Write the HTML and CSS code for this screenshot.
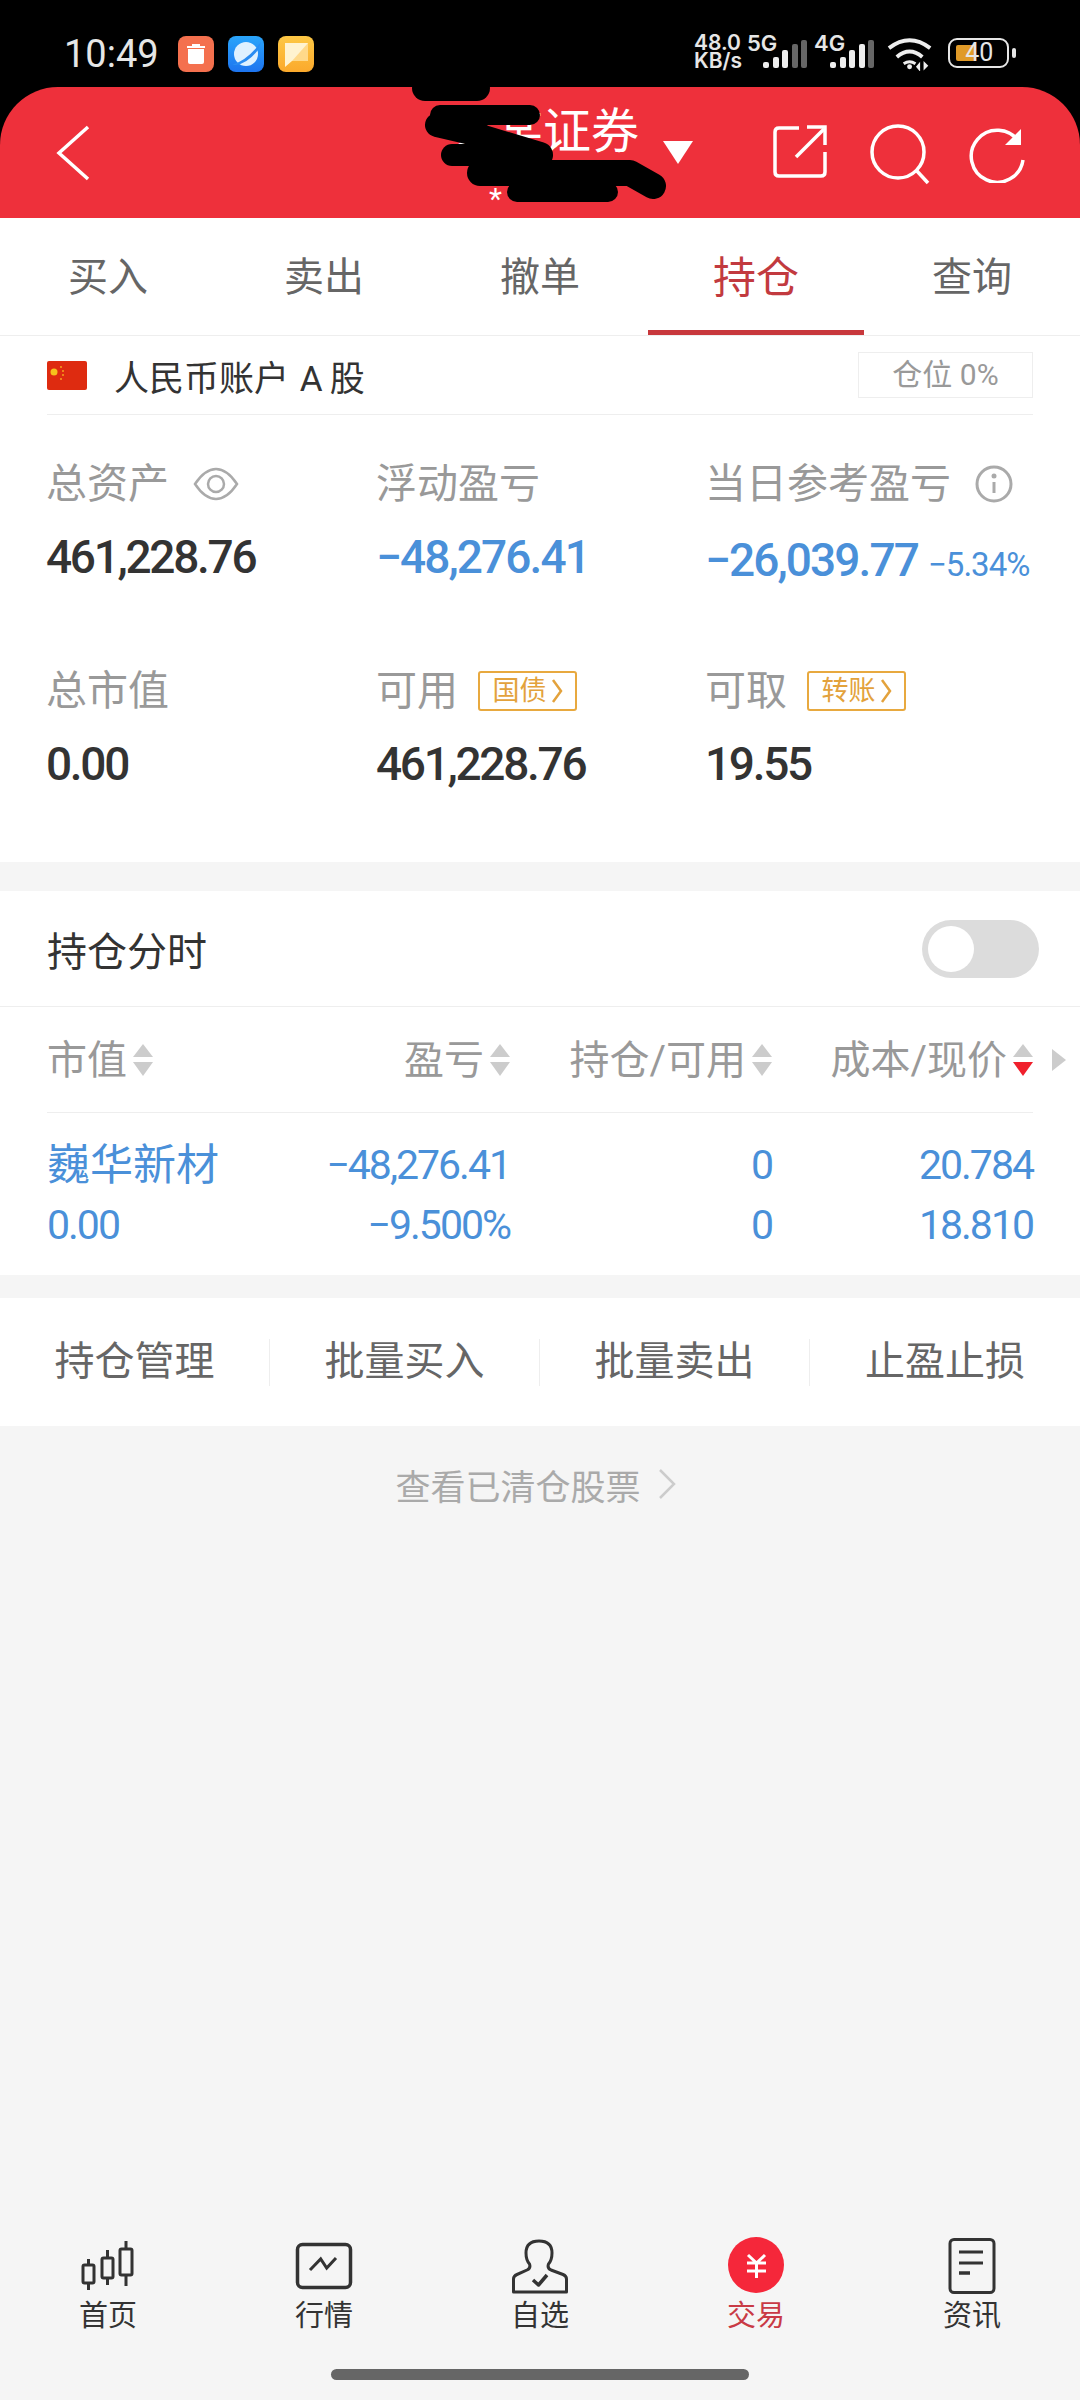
FILE: index.html
```html
<!DOCTYPE html>
<html>
<head>
    <title>持仓</title>
    <meta charset="UTF-8">
    <meta name="viewport" content="width=device-width, initial-scale=1.0">
    <link rel="stylesheet" href="styles.css">
</head>
<body>
<div class="page">

    <div class="head">
        <!-- status bar -->
        <div class="status">
            <span class="clock">10:49</span>
            <span class="app-icon app-orange">
                <svg width="36" height="36" viewBox="0 0 36 36"><path d="M10 13h16v13q0 2-2 2H12q-2 0-2-2z" fill="#fff"/><path d="M9 11h18" stroke="#fff" stroke-width="2"/><path d="M14 9h8" stroke="#fff" stroke-width="2"/></svg>
            </span>
            <span class="app-icon app-blue">
                <svg width="36" height="36" viewBox="0 0 36 36"><circle cx="18" cy="18" r="12" fill="#dff1ff"/><path d="M4 29Q20 24 33 6L30 14Q20 27 8 29z" fill="#2a8cf2"/></svg>
            </span>
            <span class="app-icon app-yellow">
                <svg width="36" height="36" viewBox="0 0 36 36"><path d="M7 7h23v18H14l-7 6z" fill="#fff3d0"/><path d="M30 7v18H14z" fill="#ffd98a"/></svg>
            </span>
            <div class="status-right">
                <div class="speed"><span>48.0</span><span>KB/s</span></div>
                <div class="signal signal-5g">
                    <span class="net">5G</span>
                    <svg width="44" height="28" viewBox="0 0 44 28"><rect x="0" y="22" width="6" height="6" rx="2" fill="#eee"/><rect x="10" y="17" width="6" height="11" rx="2" fill="#eee"/><rect x="19" y="10" width="6" height="18" rx="2" fill="#eee"/><rect x="29" y="4" width="6" height="24" rx="2" fill="#666"/><rect x="38" y="0" width="6" height="28" rx="2" fill="#666"/></svg>
                </div>
                <div class="signal signal-4g">
                    <span class="net">4G</span>
                    <svg width="44" height="28" viewBox="0 0 44 28"><rect x="0" y="22" width="6" height="6" rx="2" fill="#eee"/><rect x="10" y="17" width="6" height="11" rx="2" fill="#eee"/><rect x="19" y="10" width="6" height="18" rx="2" fill="#eee"/><rect x="29" y="4" width="6" height="24" rx="2" fill="#eee"/><rect x="38" y="0" width="6" height="28" rx="2" fill="#666"/></svg>
                </div>
                <svg class="wifi" width="46" height="34" viewBox="0 0 46 34" fill="none" stroke="#eee" stroke-width="4"><path d="M2 11Q23-5 44 11"/><path d="M10 20Q23 9 36 20"/><path d="M17 27Q23 23 29 27" stroke-width="3"/><circle cx="23" cy="30" r="2.500" fill="#eee" stroke="none"/><path d="M33 33v-6l-2.500 3zM38 26v6l3-3z" stroke-width="1.500" fill="#eee"/></svg>
                <div class="battery">
                    <span class="battery-fill"></span>
                    <span class="battery-num">40</span>
                </div>
                <span class="battery-nub"></span>
            </div>
        </div>

        <!-- red title bar -->
        <div class="topbar">
            <svg class="back" width="40" height="60" viewBox="0 0 40 60" fill="none" stroke="#fff" stroke-width="3.500"><path d="M33 4L4 30l29 26"/></svg>
            <div class="title-box">
                <div class="title">某某证券</div>
                <div class="subtitle">* ****</div>
            </div>
            <span class="title-arrow"></span>
            <div class="top-actions">
                <svg class="act-share" width="56" height="56" viewBox="0 0 56 56" fill="none" stroke="#fff" stroke-width="3.500"><path d="M28 4H8q-4 0-4 4v40q0 4 4 4h42q4 0 4-4V28"/><path d="M25 33L53 5"/><path d="M36 3h18v18"/></svg>
                <svg class="act-search" width="62" height="62" viewBox="0 0 62 62" fill="none" stroke="#fff" stroke-width="3.500"><circle cx="30" cy="29" r="26"/><path d="M48 47l12 13"/></svg>
                <svg class="act-refresh" width="60" height="60" viewBox="0 0 60 60" fill="none" stroke="#fff" stroke-width="3.500"><path d="M51 19A26 26 0 1 0 55 37"/><path d="M53 6v16H37" fill="#fff" stroke="none"/></svg>
            </div>
            <svg class="scribble" width="1080" height="131" viewBox="0 0 1080 131" fill="none" stroke="#000" stroke-linecap="round" stroke-linejoin="round">
                <path d="M425 1H477" stroke-width="26"/>
                <path d="M440 28H530" stroke-width="20"/>
                <path d="M437 38L480 48" stroke-width="24"/>
                <path d="M480 50L540 68" stroke-width="26"/>
                <path d="M452 68H540" stroke-width="22"/>
                <path d="M480 86H630L653 99" stroke-width="26"/>
                <path d="M517 105H608" stroke-width="20"/>
            </svg>
        </div>
    </div>

    <!-- tabs -->
    <div class="tabs">
        <div class="tab">买入</div>
        <div class="tab">卖出</div>
        <div class="tab">撤单</div>
        <div class="tab tab-active">持仓</div>
        <div class="tab">查询</div>
    </div>

    <!-- account -->
    <div class="card">
        <div class="account">
            <svg class="flag" width="40" height="29" viewBox="0 0 40 29"><rect width="40" height="29" rx="2" fill="#de2b10"/><circle cx="7" cy="11" r="3.500" fill="#f6c21c"/><circle cx="14" cy="6" r="1" fill="#f6a21c"/><circle cx="16" cy="10" r="1" fill="#f6a21c"/><circle cx="16" cy="14" r="1" fill="#f6a21c"/><circle cx="14" cy="18" r="1" fill="#f6a21c"/></svg>
            <span class="account-name">人民币账户 A&#8201;股</span>
            <span class="position">仓位 0%</span>
        </div>
        <div class="stats">
            <div>
                <div class="label">总资产
                    <svg class="eye" width="46" height="34" viewBox="0 0 46 34" fill="none" stroke="#aaa" stroke-width="2.500"><path d="M2 17Q12 2 23 2T44 17Q34 32 23 32T2 17z"/><circle cx="23" cy="17" r="8"/></svg>
                </div>
                <div class="value">461,228.76</div>
            </div>
            <div>
                <div class="label">浮动盈亏</div>
                <div class="value value-blue">−48,276.41</div>
            </div>
            <div>
                <div class="label">当日参考盈亏
                    <svg class="info" width="38" height="38" viewBox="0 0 38 38" fill="none" stroke="#aaa" stroke-width="3"><circle cx="19" cy="19" r="17"/><path d="M19 17v11"/><circle cx="19" cy="11" r="2.500" fill="#aaa" stroke="none"/></svg>
                </div>
                <div class="value value-blue value-today">−26,039.77<span class="pct">−5.34%</span></div>
            </div>
            <div>
                <div class="label">总市值</div>
                <div class="value">0.00</div>
            </div>
            <div>
                <div class="label">可用<span class="tag">国债<svg width="12" height="26" viewBox="0 0 12 26" fill="none" stroke="#e3a23c" stroke-width="2.500"><path d="M2 2l8 11-8 11"/></svg></span></div>
                <div class="value">461,228.76</div>
            </div>
            <div>
                <div class="label">可取<span class="tag">转账<svg width="12" height="26" viewBox="0 0 12 26" fill="none" stroke="#e3a23c" stroke-width="2.500"><path d="M2 2l8 11-8 11"/></svg></span></div>
                <div class="value">19.55</div>
            </div>
        </div>
    </div>

    <!-- holdings -->
    <div class="card holdings">
        <div class="toggle-row">
            <span>持仓分时</span>
            <span class="toggle"><span class="knob"></span></span>
        </div>
        <div class="thead">
            <div class="cols">
                <div class="th th-left">市值<svg class="sort" width="20" height="32" viewBox="0 0 20 32"><path d="M10 0l10 13H0z" fill="#ccc"/><path d="M10 32L0 18h20z" fill="#ccc"/></svg></div>
                <div class="th">盈亏<svg class="sort" width="20" height="32" viewBox="0 0 20 32"><path d="M10 0l10 13H0z" fill="#ccc"/><path d="M10 32L0 18h20z" fill="#ccc"/></svg></div>
                <div class="th">持仓/可用<svg class="sort" width="20" height="32" viewBox="0 0 20 32"><path d="M10 0l10 13H0z" fill="#ccc"/><path d="M10 32L0 18h20z" fill="#ccc"/></svg></div>
                <div class="th">成本/现价<svg class="sort" width="20" height="32" viewBox="0 0 20 32"><path d="M10 0l10 13H0z" fill="#ccc"/><path d="M10 32L0 18h20z" fill="#f0202c"/></svg></div>
            </div>
            <svg class="more" width="14" height="22" viewBox="0 0 14 22"><path d="M0 0l14 11L0 22z" fill="#ccc"/></svg>
        </div>
        <div class="cols row">
            <div class="stock-name">巍华新材</div>
            <div class="num">−48,276.41</div>
            <div class="num">0</div>
            <div class="num">20.784</div>
            <div class="left">0.00</div>
            <div class="num">−9.500%</div>
            <div class="num">0</div>
            <div class="num">18.810</div>
        </div>
    </div>

    <!-- actions -->
    <div class="card actions">
        <div class="action">持仓管理</div>
        <div class="action">批量买入</div>
        <div class="action">批量卖出</div>
        <div class="action">止盈止损</div>
    </div>

    <div class="cleared">
        <span>查看已清仓股票</span>
        <svg width="18" height="30" viewBox="0 0 18 30" fill="none" stroke="#ccc" stroke-width="2.500"><path d="M2 1l14 14L2 29"/></svg>
    </div>

    <!-- bottom nav -->
    <div class="nav">
        <div class="nav-items">
            <div class="nav-item">
                <svg width="60" height="56" viewBox="0 0 60 56" fill="none" stroke="#333" stroke-width="3"><rect x="5" y="27" width="11" height="18" rx="1.500"/><path d="M10.500 21v6M10.500 45v7"/><rect x="24" y="20" width="11" height="20" rx="1.500"/><path d="M29.500 12v8M29.500 40v7"/><rect x="42" y="11" width="12" height="26" rx="1.500"/><path d="M48 3v8M48 37v11"/></svg>
                <span>首页</span>
            </div>
            <div class="nav-item">
                <svg width="60" height="56" viewBox="0 0 60 56" fill="none" stroke="#333" stroke-width="3.500"><rect x="3.500" y="6.500" width="53" height="43" rx="5"/><path d="M16 32L26.700 21 32.700 30 42 20" stroke-width="3"/></svg>
                <span>行情</span>
            </div>
            <div class="nav-item">
                <svg width="60" height="56" viewBox="0 0 60 56" fill="none" stroke="#333" stroke-width="3" stroke-linejoin="round"><path d="M3.500 54V41Q3.500 38 7 36.500L17 32Q21 30 19.500 26 16 22 16 15 16 3 29 3 42 3 42 15 42 22 38.500 26 37 30 41 32L53 36.500Q56.500 38 56.500 41V54z"/><path d="M23 42l5.500 5L37 37" stroke-width="3.500"/></svg>
                <span>自选</span>
            </div>
            <div class="nav-item nav-active">
                <svg width="60" height="56" viewBox="0 0 60 56" fill="none" stroke="#fff" stroke-width="3"><circle cx="30" cy="27" r="28" fill="#f5273a" stroke="none"/><path d="M22 17l8.500 8L39 17M21 25h19M21 33h19M30.500 25v15"/></svg>
                <span>交易</span>
            </div>
            <div class="nav-item">
                <svg width="60" height="56" viewBox="0 0 60 56" fill="none" stroke="#333" stroke-width="3"><rect x="8" y="1.500" width="44" height="53" rx="4"/><path d="M17 14h24M17 25h24"/><path d="M17 35h11" stroke-width="3.500"/></svg>
                <span>资讯</span>
            </div>
        </div>
        <div class="home-bar"></div>
    </div>

</div>
</body>
</html>
```

FILE: styles.css
```css
body {
    margin: 0;
    font-family: Roboto, "Noto Sans CJK SC", sans-serif;
    color: #333;
    background-color: #f5f5f5;
}

.page {
    width: 1080px;
    height: 2400px;
    display: flex;
    flex-direction: column;
    background-color: #f5f5f5;
    overflow: hidden;
}

.head {
    flex-shrink: 0;
    background-color: #000;
}

/* status bar */
.status {
    height: 87px;
    box-sizing: border-box;
    padding: 36px 0 0 64px;
    display: flex;
    align-items: flex-start;
    color: #e6e6e6;
}

.clock {
    font-size: 38px;
    line-height: 36px;
    width: 114px;
}

.app-icon {
    width: 36px;
    height: 36px;
    border-radius: 8px;
    margin-right: 14px;
    display: block;
}

.app-orange { background-color: #f4704e; }
.app-blue { background: linear-gradient(#2aa5fb, #1d74ef); }
.app-yellow { background: linear-gradient(#fdc845, #fba92c); }

.status-right {
    margin-left: auto;
    width: 386px;
    padding-right: 64px;
    box-sizing: border-box;
    display: flex;
    align-items: flex-start;
}

.speed {
    width: 48px;
    margin-right: 21px;
    display: flex;
    flex-direction: column;
    font-family: Inter, sans-serif;
    font-size: 21px;
    font-weight: 600;
    line-height: 18px;
    margin-top: -2px;
}

.signal {
    position: relative;
    width: 44px;
    height: 28px;
    margin-top: 4px;
}

.signal-5g { margin-left: 0; }
.signal-4g { margin-left: 23px; }

.net {
    position: absolute;
    top: -7px;
    left: -16px;
    font-family: Inter, sans-serif;
    font-size: 22px;
    font-weight: 600;
    line-height: 20px;
}

.wifi {
    margin: 1px 0 0 13px;
}

.battery {
    position: relative;
    width: 62px;
    height: 30px;
    box-sizing: border-box;
    margin: 2px 0 0 16px;
    border: 2px solid #e6e6e6;
    border-radius: 9px;
}

.battery-fill {
    position: absolute;
    left: 6px;
    top: 5px;
    width: 20px;
    height: 16px;
    background-color: #e09a28;
    border-radius: 2px;
}

.battery-num {
    position: absolute;
    left: 15px;
    top: 0;
    font-size: 25px;
    line-height: 26px;
}

.battery-nub {
    width: 4px;
    height: 10px;
    background-color: #e6e6e6;
    border-radius: 2px;
    margin: 12px 0 0 3px;
}

/* title bar */
.topbar {
    position: relative;
    height: 131px;
    background-color: #ee303b;
    border-radius: 58px 58px 0 0;
    display: flex;
    align-items: flex-start;
    color: #fff;
}

.back {
    margin: 36px 0 0 55px;
}

.title-box {
    margin-left: 352px;
    width: 193px;
}

.title {
    font-size: 48px;
    line-height: 60px;
    margin-top: 15px;
    white-space: nowrap;
}

.subtitle {
    font-size: 30px;
    line-height: 36px;
    margin: 19px 0 0 42px;
}

.title-arrow {
    width: 0;
    height: 0;
    margin: 54px 0 0 23px;
    border-left: 15px solid transparent;
    border-right: 15px solid transparent;
    border-top: 23px solid #fff;
}

.top-actions {
    margin-left: auto;
    margin-right: 52px;
    display: flex;
    padding-top: 37px;
}

.act-search { margin-left: 41px; margin-top: -1px; }
.act-refresh { margin-left: 38px; margin-top: -1px; }

.scribble {
    position: absolute;
    left: 0;
    top: 0;
    overflow: visible;
}

/* tabs */
.tabs {
    height: 118px;
    flex-shrink: 0;
    box-sizing: border-box;
    background-color: #fff;
    border-bottom: 1px solid #eee;
    display: flex;
}

.tab {
    flex: 1;
    text-align: center;
    font-size: 40px;
    line-height: 120px;
    color: #666;
    height: 117px;
    box-sizing: border-box;
}

.tab-active {
    font-size: 43px;
    color: #c23a3f;
    border-bottom: 5px solid #c8383c;
}

.card {
    background-color: #fff;
}

/* account */
.account {
    height: 78px;
    margin: 0 47px;
    border-bottom: 1px solid #eee;
    display: flex;
    align-items: center;
}

.account-name {
    margin-left: 27px;
    font-size: 35px;
    word-spacing: 2px;
    color: #333;
}

.position {
    margin-left: auto;
    width: 175px;
    height: 46px;
    box-sizing: border-box;
    border: 1px solid #eee;
    text-align: center;
    font-size: 30px;
    line-height: 44px;
    color: #999;
}

/* stats grid */
.stats {
    display: grid;
    grid-template-columns: 330px 329px 1fr;
    row-gap: 69px;
    padding: 39px 0 68px 46px;
}

.label {
    display: flex;
    align-items: center;
    font-size: 41px;
    line-height: 60px;
    color: #999;
}

.eye { margin-left: 24px; }
.info { margin-left: 24px; }

.tag {
    display: flex;
    align-items: center;
    justify-content: center;
    gap: 4px;
    width: 99px;
    height: 40px;
    box-sizing: border-box;
    margin-left: 20px;
    border: 2px solid #e8a93f;
    border-radius: 3px;
    font-size: 27px;
    color: #e3a23c;
}

.value {
    margin-top: 13px;
    font-size: 46px;
    font-weight: 500;
    letter-spacing: -2.300px;
    line-height: 60px;
    color: #333;
    white-space: nowrap;
}

.value-blue {
    color: #4a90d9;
    letter-spacing: -1.900px;
}

.value-today {
    line-height: 54px;
    padding-top: 6px;
}

.pct {
    margin-left: 10px;
    font-size: 33px;
    font-weight: 400;
    letter-spacing: -1px;
}

/* holdings table */
.holdings {
    margin-top: 29px;
}

.toggle-row {
    height: 116px;
    box-sizing: border-box;
    padding: 0 41px 0 47px;
    border-bottom: 1px solid #eee;
    display: flex;
    align-items: center;
    justify-content: space-between;
    font-size: 40px;
    color: #333;
}

.toggle {
    width: 117px;
    height: 58px;
    box-sizing: border-box;
    padding: 6px;
    border-radius: 29px;
    background-color: #dcdcdc;
}

.knob {
    display: block;
    width: 46px;
    height: 46px;
    border-radius: 50%;
    background-color: #fff;
}

.thead {
    height: 105px;
    box-sizing: border-box;
    padding: 0 0 6px 47px;
    display: flex;
    align-items: center;
}

.cols {
    width: 986px;
    display: grid;
    grid-template-columns: 253px 210px 262px 261px;
}

.th {
    display: flex;
    align-items: center;
    justify-content: flex-end;
    gap: 6px;
    font-size: 40px;
    color: #999;
}

.th-left {
    justify-content: flex-start;
}

.sort {
    margin-top: 6px;
}

.more {
    margin: 6px 0 0 19px;
}

.row {
    margin: 0 47px;
    padding: 22px 0 20px;
    border-top: 1px solid #eee;
    font-size: 41px;
    letter-spacing: -2px;
    line-height: 60px;
    color: #4a90d9;
}

.stock-name {
    font-size: 43px;
    letter-spacing: 0;
}

.num {
    text-align: right;
}

/* action buttons */
.actions {
    margin-top: 23px;
    height: 128px;
    display: flex;
    align-items: center;
}

.action {
    width: 270px;
    height: 47px;
    line-height: 45px;
    border-right: 1px solid #eee;
    box-sizing: border-box;
    text-align: center;
    font-size: 40px;
    color: #666;
}

.action:last-child {
    border-right: none;
}

.cleared {
    height: 116px;
    box-sizing: border-box;
    padding-right: 9px;
    display: flex;
    align-items: center;
    justify-content: center;
    gap: 17px;
    font-size: 35px;
    color: #aaa;
}

/* bottom nav */
.nav {
    margin-top: auto;
}

.nav-items {
    display: flex;
}

.nav-item {
    flex: 1;
    display: flex;
    flex-direction: column;
    align-items: center;
    font-size: 29px;
    line-height: 36px;
    color: #333;
}

.nav-item svg {
    overflow: visible;
    margin-bottom: 4px;
}

.nav-active {
    color: #c93a45;
}

.home-bar {
    width: 418px;
    height: 11px;
    margin: 35px auto 20px;
    border-radius: 6px;
    background-color: #666;
}
```
